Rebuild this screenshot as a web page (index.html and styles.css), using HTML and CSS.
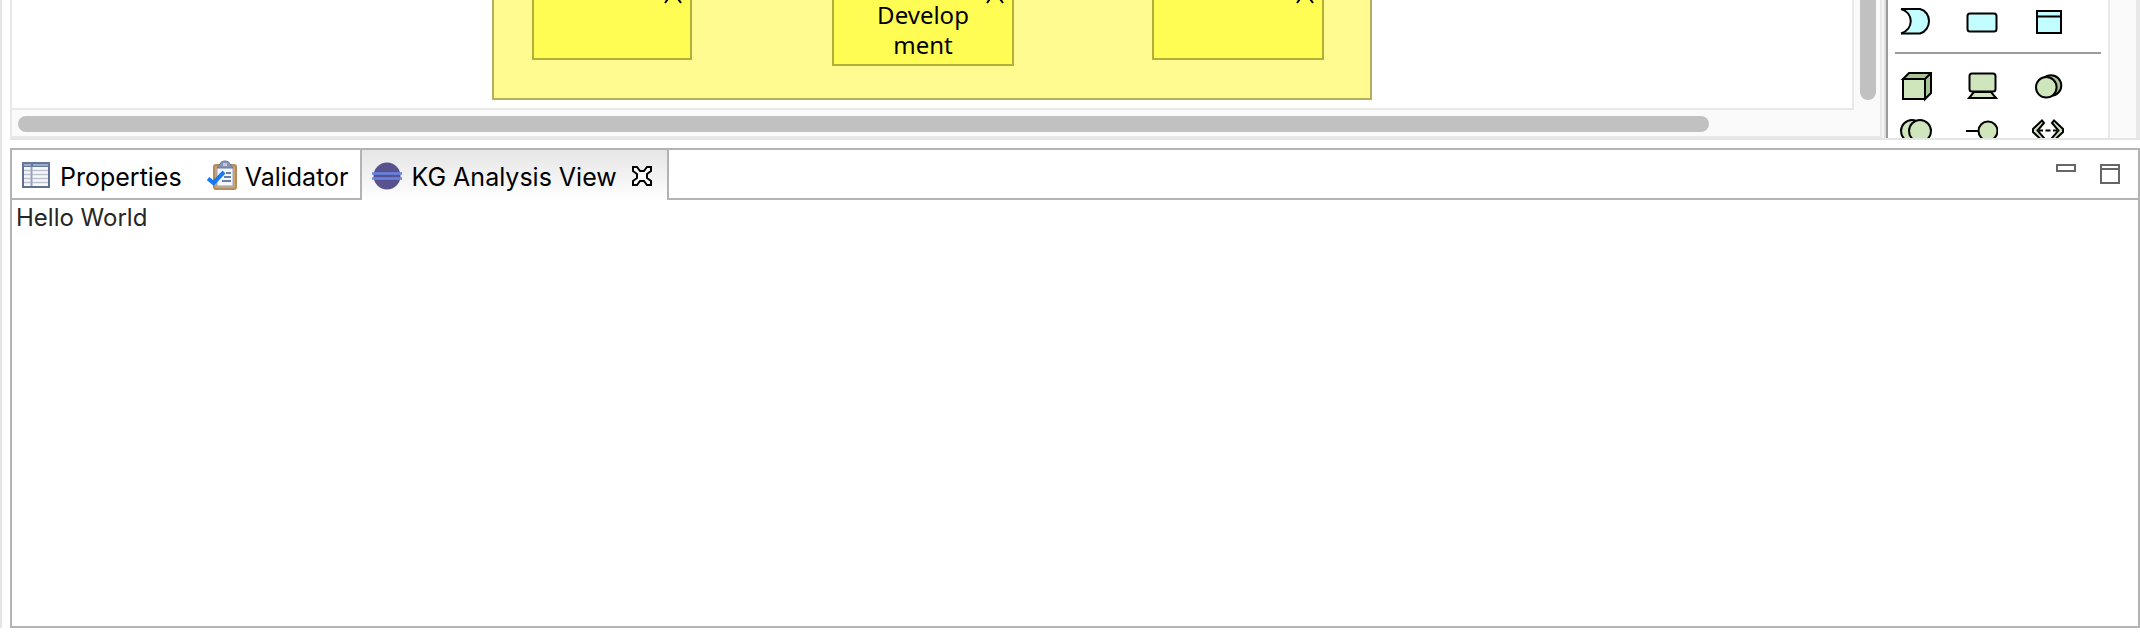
FILE: index.html
```html
<!DOCTYPE html>
<html lang="en">
<head>
<meta charset="utf-8">
<title>KG Analysis View</title>
<link rel="stylesheet" href="styles.css">
</head>
<body>
<div class="workbench">
  <section class="editor" aria-label="Diagram editor">
    <div class="viewer">
      <div class="viewer-row">
        <div class="canvas">
          <div class="group">
            <div class="node node-left"><svg class="chevron" width="20" height="8" viewBox="0 0 20 8"><path d="M2 7L10-4L18 7"/></svg></div>
            <div class="node node-middle"><svg class="chevron" width="20" height="8" viewBox="0 0 20 8"><path d="M2 7L10-4L18 7"/></svg><span>Develop<br>ment</span></div>
            <div class="node node-right"><svg class="chevron" width="20" height="8" viewBox="0 0 20 8"><path d="M2 7L10-4L18 7"/></svg></div>
          </div>
        </div>
        <div class="vscroll"><div class="vthumb"></div></div>
      </div>
      <div class="hscroll"><div class="hthumb"></div></div>
    </div>
    <div class="sash"></div>
    <div class="palette">
      <div class="tools">
        <button class="tool" aria-label="Application event"><svg viewBox="0 0 32 32"><path class="cyan" d="M1 3H20C32 6 32 24 20 27.500H1"/><path class="paper" d="M1 3C14 7 14 23 1 27.500"/></svg></button>
        <button class="tool" aria-label="Application service"><svg viewBox="0 0 32 32"><rect class="cyan" x="1.500" y="7.500" width="29" height="18" rx="2.500"/></svg></button>
        <button class="tool" aria-label="Data object"><svg viewBox="0 0 32 32"><path class="cyan" d="M5 5H29V27H5ZM5 10.500H29"/></svg></button>
      </div>
      <hr class="divider">
      <div class="tools">
        <button class="tool" aria-label="Node"><svg viewBox="0 0 32 32"><path class="dark" d="M3 9L9 3H31V23L25 29V9Z"/><path class="green" d="M3 9H25V29H3Z"/><path class="line" d="M25 9L31 3"/></svg></button>
        <button class="tool" aria-label="Device"><svg viewBox="0 0 32 32"><path class="green" d="M8 22L3 28H30L25 22Z"/><rect class="green" x="3.500" y="3.500" width="26" height="18" rx="2.500"/></svg></button>
        <button class="tool" aria-label="System software"><svg viewBox="0 0 32 32"><circle class="dark" cx="19" cy="15.500" r="10.300"/><circle class="green" cx="14.300" cy="17.300" r="10.300"/></svg></button>
        <button class="tool" aria-label="Technology collaboration"><svg viewBox="0 0 32 32"><circle class="green" cx="12" cy="15" r="11"/><circle class="green" cx="20" cy="15" r="11"/></svg></button>
        <button class="tool" aria-label="Technology interface"><svg viewBox="0 0 32 32"><path class="line" d="M0 15H12"/><circle class="green" cx="22" cy="15" r="9.500"/></svg></button>
        <button class="tool" aria-label="Path"><svg viewBox="0 0 32 32"><path class="green" d="M10 4.500L1 13V16L10 24.500L12 22L5.500 14.500L12 7ZM22 4.500L31 13V16L22 24.500L20 22L26.500 14.500L20 7Z"/><path class="line" d="M7 14.500H11M13.500 14.500H18.500M21 14.500H25"/></svg></button>
      </div>
    </div>
    <div class="palette-scroll"></div>
  </section>

  <section class="view">
    <header class="tabbar">
      <div class="tabs" role="tablist">
        <button class="tab" role="tab" aria-selected="false">
          <svg width="28" height="28" viewBox="0 0 28 28"><path fill="#f7f8fb" stroke="#60708f" stroke-width="2" d="M1 2H27V26H1Z"/><path fill="#65789b" d="M0 1H28V6H0Z"/><path fill="#9dacc4" d="M2 3H9V5H2ZM11 3H26V5H11Z"/><path stroke="#bdc2cd" stroke-width="1.500" d="M2 9.500H26M2 13.500H26M2 17.500H26M2 21.500H26"/><path stroke="#96a4bf" stroke-width="2" d="M9.500 6V25"/></svg>
          <span>Properties</span>
        </button>
        <button class="tab tab-validator" role="tab" aria-selected="false">
          <svg width="30" height="30" viewBox="0 0 30 30"><rect x="7" y="5" width="22" height="24" rx="2" fill="#d0a66c" stroke="#b58b5b" stroke-width="2"/><path fill="#f6f8fd" stroke="#92a4c5" d="M10 7H26V26H10Z"/><path fill="#8794b5" stroke="#697895" d="M10 8L13 4C14 0 22 0 23 4L26 8Z"/><path fill="#c0c8da" d="M16 3H20V6H16Z"/><path stroke="#6780aa" stroke-width="2" d="M19 13H24M17 17H24M15 21H24"/><path fill="none" stroke="#1778f5" stroke-width="4" d="M1 18.500L6.500 23L17 12"/></svg>
          <span>Validator</span>
        </button>
        <div class="tab-active">
          <button class="tab" role="tab" aria-selected="true">
            <svg width="30" height="30" viewBox="0 0 30 30"><circle cx="15" cy="16" r="13.500" fill="#58528f"/><path stroke="#6685e6" stroke-width="2.500" d="M0 13.500H30M0 18.500H30"/></svg>
            <span>KG Analysis View</span>
          </button>
          <button class="close" aria-label="Close KG Analysis View"><svg width="20" height="20" viewBox="0 0 20 20"><path fill="#fff" stroke="#000" stroke-width="2" d="M1 1H5L8 5H12L15 1H19V5L15 8V12L19 15V19H15L12 15H8L5 19H1V15L5 12V8L1 5Z"/></svg></button>
        </div>
      </div>
      <div class="actions">
        <button aria-label="Minimize"><svg width="20" height="20" viewBox="0 0 20 20"><path d="M1 1H19V7H1Z"/></svg></button>
        <button aria-label="Maximize"><svg width="20" height="20" viewBox="0 0 20 20"><path d="M1 1H19V19H1ZM1 5H19"/></svg></button>
      </div>
    </header>
    <div class="content">Hello World</div>
  </section>
</div>
</body>
</html>
```
FILE: styles.css
```css
* { box-sizing: border-box; }

body {
  margin: 0;
  background: #fff;
  color: #000;
  font-family: Inter, "Liberation Sans", sans-serif;
}

button {
  margin: 0;
  padding: 0;
  border: 0;
  background: none;
  color: inherit;
  font: inherit;
}

svg { display: block; flex: none; }

.workbench {
  display: flex;
  flex-direction: column;
  gap: 8px;
  min-height: 100vh;
  padding: 0 0 14px 8px;
  background: linear-gradient(#e5e5e5, #e5e5e5) 0 0 / 2px calc(100% - 14px) no-repeat;
}

.workbench > section { margin-left: 2px; }

/* Editor */
.editor {
  display: flex;
  height: 140px;
  border-bottom: 2px solid #e5e5e5;
  overflow: hidden;
}

.viewer {
  display: flex;
  flex: 1;
  flex-direction: column;
  border: solid #e8e8e8;
  border-width: 0 2px 2px;
  background: #fafafa;
}

.viewer-row { display: flex; flex: 1; }

.canvas {
  position: relative;
  flex: 1;
  border: solid #e8e8e8;
  border-width: 0 2px 2px 0;
  background: #fff;
}

.group {
  position: absolute;
  top: 0;
  left: 480px;
  width: 880px;
  height: 100px;
  border: 2px solid #b2b05f;
  border-top: 0;
  background: #fffb91;
}

.node {
  position: absolute;
  top: 0;
  height: 60px;
  border: 2px solid #b2b038;
  border-top: 0;
  background: #fffd54;
  font: 400 24px/30px "Noto Sans", "Open Sans", sans-serif;
  text-align: center;
}

.node-left { left: 38px; width: 160px; }
.node-middle { left: 338px; width: 182px; height: 66px; }
.node-right { left: 658px; width: 172px; }

.chevron {
  position: absolute;
  top: -4px;
  right: 7px;
  fill: none;
  stroke: #000;
  stroke-width: 2;
}

.vscroll { width: 26px; padding: 0 4px 10px 6px; }
.vthumb { width: 16px; height: 100px; border-radius: 0 0 8px 8px; background: #c1c1c1; }
.hscroll { height: 26px; padding: 6px; }
.hthumb { width: 91.1%; height: 16px; border-radius: 8px; background: #c1c1c1; }

.sash {
  width: 6px;
  border-right: 2px solid #9c9c9c;
  background: linear-gradient(90deg, #f5f5f5 2px, #dedede 2px);
}

.palette { width: 220px; padding: 6px 7px 0; }

.tools {
  display: grid;
  grid-template-columns: repeat(3, 32px);
  gap: 14px 34px;
  padding: 0 5px;
}

.tool { width: 32px; height: 32px; }
.tool svg { width: 32px; height: 32px; stroke: #000; stroke-width: 2; }

.divider { margin: 14px 0 16px; border: 0; border-top: 2px solid #9c9c9c; }

.cyan { fill: #c2fdff; }
.green { fill: #cfe6bc; }
.dark { fill: #a9c296; }
.paper { fill: #fff; }
.line { fill: none; }

.palette-scroll {
  width: 32px;
  border: solid #e8e8e8;
  border-width: 0 4px 0 2px;
  background: #fafafa;
}

/* View with tabs */
.view {
  display: flex;
  flex: 1;
  flex-direction: column;
  border: 2px solid #b3b3b3;
}

.tabbar {
  display: flex;
  justify-content: space-between;
  height: 50px;
  background: linear-gradient(#b3b3b3, #b3b3b3) 0 100% / 100% 2px no-repeat;
}

.tabs { display: flex; font-size: 25px; }

.tab {
  display: flex;
  align-items: center;
  gap: 10px;
  height: 50px;
  padding: 0 0 0 10px;
  white-space: nowrap;
}

.tab span { padding-top: 3px; }

.tab-validator { gap: 8px; padding: 0 12px 0 25px; }

.tab-active {
  display: flex;
  align-items: center;
  gap: 15px;
  padding-right: 15px;
  border: solid #b3b3b3;
  border-width: 0 2px;
  background: linear-gradient(#e5e5e5, #fff);
}

.tab-active .tab { gap: 9px; }

.close { padding-top: 2px; }

.actions { display: flex; gap: 24px; padding: 14px 18px 0 0; }
.actions button { height: 20px; }
.actions svg { fill: #fff; stroke: #666; stroke-width: 2; }

.content {
  flex: 1;
  padding: 3px 4px;
  color: #262626;
  font-size: 24px;
  line-height: 30px;
}
```
